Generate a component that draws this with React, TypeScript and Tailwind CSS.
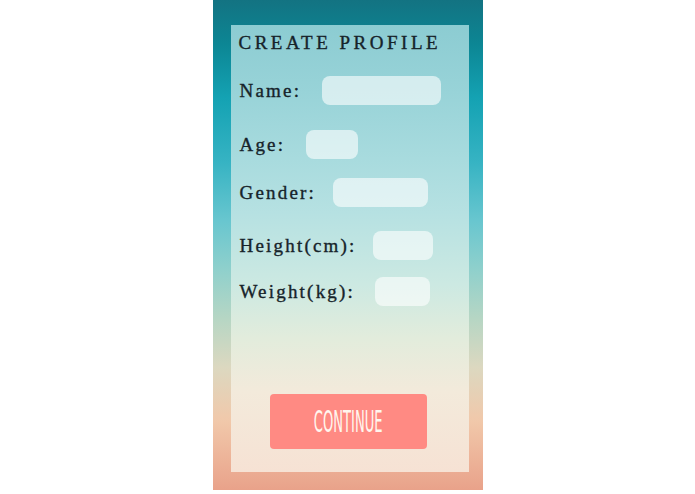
import React from "react";

const serif = {
  fontFamily: '"Liberation Serif", "DejaVu Serif", serif',
  WebkitTextStroke: "0.35px #16232a",
};

function Row({
  label,
  labelW,
  inputW,
  mt,
}: {
  label: string;
  labelW: string;
  inputW: string;
  mt: string;
}) {
  return (
    <div className={`flex h-[29px] items-center ${mt}`}>
      <div
        className={`${labelW} shrink-0 pl-[1px] text-[19px] leading-[24px] tracking-[2.2px] text-[#16232a]`}
        style={serif}
      >
        {label}
      </div>
      <div className={`${inputW} h-[29px] shrink-0 rounded-lg bg-white/60`} />
    </div>
  );
}

export default function App() {
  return (
    <div className="min-h-[494px] w-full bg-white">
      <div className="mx-auto flex h-[490px] w-[270px] bg-[linear-gradient(to_bottom,#137382_0%,#0c8694_9%,#14a2b3_20%,#36b3c3_33%,#68c6cf_45%,#8fd0cc_55%,#b6d6c4_65%,#dcd8c0_75%,#f1c8aa_86%,#e9a28a_100%)] pl-[18px] pt-[25px]">
        <div className="flex h-[447px] w-[238px] flex-col bg-[linear-gradient(to_bottom,#8cccd2_0%,#98d3d8_15%,#a8dbde_30%,#b6e1e2_42%,#cce9e2_58%,#e2ecdc_70%,#f3eadb_82%,#f6e2d4_100%)] pl-[8px] pt-[6px]">
          <div
            className="h-[24px] text-[19px] leading-[24px] tracking-[3.5px] text-[#16232a]"
            style={serif}
          >
            CREATE PROFILE
          </div>
          <Row label="Name:" labelW="w-[83px]" inputW="w-[119px]" mt="mt-[21px]" />
          <Row label="Age:" labelW="w-[67px]" inputW="w-[52px]" mt="mt-[25px]" />
          <Row label="Gender:" labelW="w-[94px]" inputW="w-[95px]" mt="mt-[19px]" />
          <Row label="Height(cm):" labelW="w-[134px]" inputW="w-[60px]" mt="mt-[24px]" />
          <Row label="Weight(kg):" labelW="w-[136px]" inputW="w-[55px]" mt="mt-[17px]" />
          <div className="mt-auto mb-[23px] ml-[31px] flex h-[55px] w-[157px] items-center justify-center rounded-[4px] bg-[#ff8a83]">
            <span
              className="inline-block scale-x-[0.47] text-[31px] leading-none text-[#fff6ee]"
              style={{ fontFamily: '"Liberation Sans Narrow", "DejaVu Sans Condensed", "Liberation Sans", sans-serif' }}
            >
              CONTINUE
            </span>
          </div>
        </div>
      </div>
    </div>
  );
}
